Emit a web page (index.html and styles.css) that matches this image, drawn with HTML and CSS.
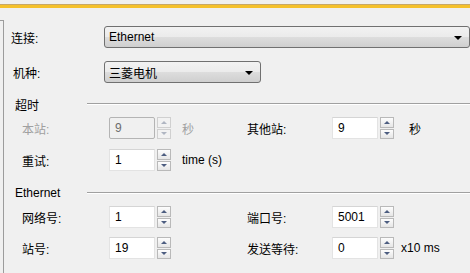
FILE: index.html
```
<!DOCTYPE html>
<html lang="zh-CN">
<head>
    <meta charset="UTF-8">
    <title>连接设置</title>
    <link rel="stylesheet" href="styles.css">
</head>
<body>
<div class="head"></div>
<div class="accent"></div>
<div class="main">
    <div class="side"></div>
    <div class="form">
        <!-- 连接 / 机种 -->
        <div class="row row-conn">
            <span class="lbl-top">连接:</span>
            <div class="combo combo-wide"><span>Ethernet</span><i class="arrow"></i></div>
        </div>
        <div class="row row-model">
            <span class="lbl-top lbl-model">机种:</span>
            <div class="combo combo-short"><span>三菱电机</span><i class="arrow"></i></div>
        </div>

        <!-- 超时 -->
        <div class="legend legend-timeout"><span class="legend-text">超时</span><span class="legend-line"></span></div>
        <div class="field first">
            <span class="lbl disabled">本站:</span>
            <div class="num num-off">9</div>
            <div class="spin spin-off"><b class="up"></b><b class="down"></b></div>
            <span class="unit disabled">秒</span>
            <span class="lbl2">其他站:</span>
            <div class="num">9</div>
            <div class="spin"><b class="up"></b><b class="down"></b></div>
            <span class="unit2 unit-sec">秒</span>
        </div>
        <div class="field">
            <span class="lbl">重试:</span>
            <div class="num">1</div>
            <div class="spin"><b class="up"></b><b class="down"></b></div>
            <span class="unit">time (s)</span>
        </div>

        <!-- Ethernet -->
        <div class="legend legend-eth"><span class="legend-text">Ethernet</span><span class="legend-line"></span></div>
        <div class="field first">
            <span class="lbl">网络号:</span>
            <div class="num">1</div>
            <div class="spin"><b class="up"></b><b class="down"></b></div>
            <span class="unit"></span>
            <span class="lbl2">端口号:</span>
            <div class="num">5001</div>
            <div class="spin"><b class="up"></b><b class="down"></b></div>
        </div>
        <div class="field field-last">
            <span class="lbl">站号:</span>
            <div class="num">19</div>
            <div class="spin"><b class="up"></b><b class="down"></b></div>
            <span class="unit"></span>
            <span class="lbl2">发送等待:</span>
            <div class="num">0</div>
            <div class="spin"><b class="up"></b><b class="down"></b></div>
            <span class="unit2">x10 ms</span>
        </div>
    </div>
</div>
</body>
</html>
```
FILE: styles.css
```
* {
    padding: 0;
    margin: 0;
    box-sizing: border-box;
}

body {
    width: 470px;
    height: 273px;
    overflow: hidden;
    background: #f0f0f0;
    font-family: "Liberation Sans", "Noto Sans CJK SC", sans-serif;
    font-size: 12px;
    color: #000;
}

.head {
    height: 4px;
}

.accent {
    height: 4px;
    border-top: 1px solid #c8a866;
    background: #f5c12c;
}

.main {
    display: flex;
}

.side {
    width: 4px;
    height: 260px;
    margin-top: 12px;
    border-top: 1px solid #9c9c9c;
    border-right: 1px solid #9c9c9c;
}

.form {
    flex: 1;
    padding-left: 7px;
}

/* 顶部两行 */
.row {
    display: flex;
    align-items: center;
    height: 22px;
}

.row-conn {
    margin-top: 18px;
}

.row-model {
    margin-top: 13px;
}

.lbl-top {
    width: 93px;
}

.lbl-model {
    padding-left: 2px;
}

.combo {
    height: 22px;
    display: flex;
    align-items: center;
    justify-content: space-between;
    padding: 0 7px 0 4px;
    border: 1px solid #707070;
    border-radius: 3px;
    background: linear-gradient(#f2f2f2, #ebebeb 50%, #dddddd 51%, #cfcfcf);
}

.combo-wide {
    width: 366px;
}

.combo-short {
    width: 157px;
}

.arrow {
    width: 0;
    height: 0;
    border-left: 4px solid transparent;
    border-right: 4px solid transparent;
    border-top: 4px solid #000;
    margin-top: 1px;
}

/* 分组标题 */
.legend {
    display: flex;
    align-items: center;
    height: 16px;
    padding-left: 4px;
}

.legend-timeout {
    margin-top: 13px;
}

.legend-eth {
    margin-top: 14px;
}

.legend-text {
    width: 72px;
}

.legend-line {
    flex: 1;
    height: 2px;
    border-top: 1px solid #a0a0a0;
    border-bottom: 1px solid #fff;
}

/* 数值行 */
.field {
    display: flex;
    align-items: center;
    height: 22px;
    padding-left: 11px;
    margin-top: 10px;
}

.field.first {
    margin-top: 5px;
}

.field-last {
    margin-top: 9px;
}

.lbl {
    width: 87px;
}

.lbl2 {
    width: 85px;
}

.disabled {
    color: #a0a0a0;
}

.num {
    width: 46px;
    height: 22px;
    padding-left: 5px;
    line-height: 20px;
    background: #fff;
    border: 1px solid #e3e3e3;
    border-top-color: #d5d5d5;
}

.num-off {
    background: #f0f0f0;
    color: #6d6d6d;
    border: 1px solid #b4b4b4;
    border-radius: 2px;
}

.spin {
    width: 14px;
    height: 22px;
    margin-left: 2px;
    display: flex;
    flex-direction: column;
    gap: 1px;
}

.spin b {
    flex: 1;
    display: flex;
    align-items: center;
    justify-content: center;
    border: 1px solid #b9b9b9;
    background: linear-gradient(#fdfdfd, #e6e6e6);
}

.spin b::after {
    content: "";
    width: 0;
    height: 0;
    border-left: 3px solid transparent;
    border-right: 3px solid transparent;
}

.spin .up::after {
    border-bottom: 3px solid #4c5d80;
}

.spin .down::after {
    border-top: 3px solid #4c5d80;
}

.spin-off b {
    border-color: #d0d0d0;
    background: #f2f2f2;
}

.spin-off .up::after {
    border-bottom-color: #b0b6c2;
}

.spin-off .down::after {
    border-top-color: #b0b6c2;
}

.unit {
    width: 76px;
    padding-left: 11px;
}

.unit2 {
    padding-left: 7px;
}

.unit-sec {
    padding-left: 15px;
}
```
